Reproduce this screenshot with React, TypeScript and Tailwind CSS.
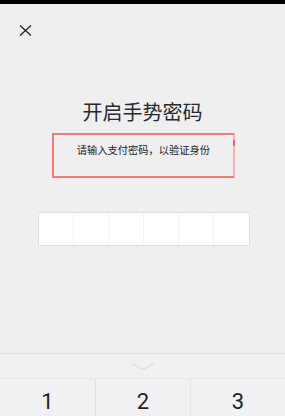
import React from "react";

export default function App() {
  const cells = [0, 1, 2, 3, 4, 5];
  return (
    <div
      className="w-[285px] h-[416px] overflow-hidden bg-[#efeff1] flex flex-col"
      style={{ fontFamily: '"Noto Sans CJK SC", "Noto Sans", sans-serif' }}
    >
      <div className="h-[4px] bg-black shrink-0" />
      <div className="ml-[19px] mt-[21px] h-[11px] w-[13px] shrink-0">
        <svg width="13" height="11" viewBox="0 0 13 11" fill="none">
          <path d="M1 0.5 L12 10.5 M12 0.5 L1 10.5" stroke="#222" strokeWidth="1.3" />
        </svg>
      </div>
      <div className="mt-[66px] text-center text-[20px] leading-[20px] text-[#2a2a2a] shrink-0">
        开启手势密码
      </div>
      <div className="relative ml-[52px] mt-[11px] w-[183px] h-[45px] border-2 border-[#f47a73] border-r-[#f7b0ab] pt-[9px] text-center text-[10.25px] leading-[12px] text-[#222] shrink-0">
        请输入支付密码，以验证身份
        <span className="absolute right-[-2px] top-[5px] h-[6px] w-[2px] bg-[#f2615a]" />
      </div>
      <div className="ml-[38px] mt-[34px] w-[212px] h-[34px] border border-[#dedede] bg-white grid grid-cols-6 shrink-0">
        {cells.map((i) => (
          <div key={i} className={i < 5 ? "border-r border-[#f3f3f3]" : ""} />
        ))}
      </div>
      <div className="mt-[107px] shrink-0 border-t border-[#e2e2e4] bg-[#f1f1f3]">
        <div className="h-[25px] flex justify-center pt-[9px] border-b border-[#e6e6e8]">
          <svg width="24" height="8" viewBox="0 0 24 8" fill="none">
            <path d="M1 1 Q8 4 12 6.5 Q16 4 23 1" stroke="#dcdcdf" strokeWidth="1.1" />
          </svg>
        </div>
        <div
          className="grid grid-cols-[96px_95px_94px] h-[46px] text-[22px] text-[#222]"
          style={{ fontFamily: 'Roboto, "Noto Sans", sans-serif' }}
        >
          <div className="flex items-center justify-center border-r border-[#e3e3e5] leading-none">1</div>
          <div className="flex items-center justify-center border-r border-[#e3e3e5] leading-none">2</div>
          <div className="flex items-center justify-center leading-none">3</div>
        </div>
      </div>
    </div>
  );
}
